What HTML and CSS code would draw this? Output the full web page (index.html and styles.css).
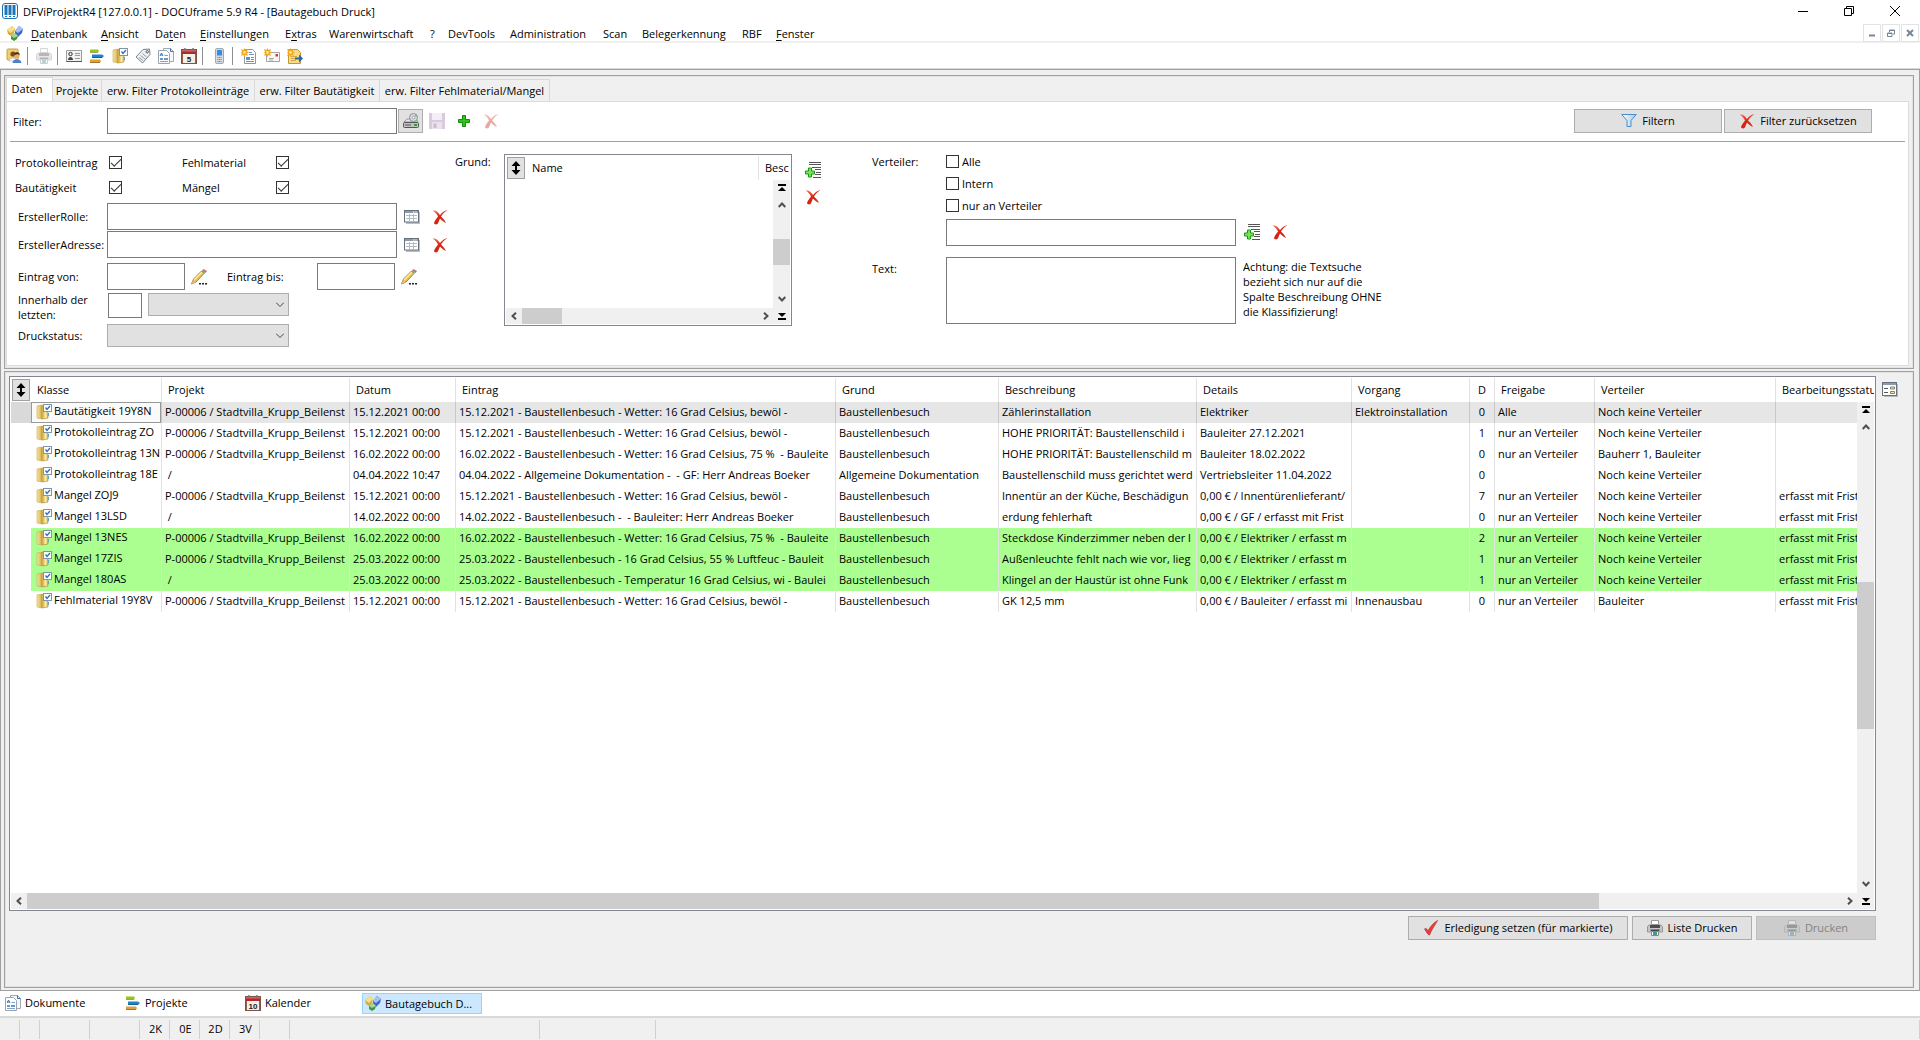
FILE: index.html
```html
<!DOCTYPE html>
<html lang="de">
<head>
<meta charset="utf-8">
<title>DFViProjektR4 [127.0.0.1] - DOCUframe 5.9 R4 - [Bautagebuch Druck]</title>
<link rel="stylesheet" href="styles.css">
</head>
<body>
<svg class="sprite" aria-hidden="true">
  <defs>
    <linearGradient id="gFolder" x1="0" x2="1"><stop offset="0" stop-color="#f8e9a4"/><stop offset="1" stop-color="#d4ac44"/></linearGradient>
    <linearGradient id="gFunnel" x1="0" x2="1"><stop offset="0" stop-color="#fff"/><stop offset="1" stop-color="#9cc9ea"/></linearGradient>
    <linearGradient id="gRed" x1="0" x2="1" y2="1"><stop offset="0" stop-color="#f0806c"/><stop offset=".5" stop-color="#d8200c"/><stop offset="1" stop-color="#b84030"/></linearGradient>
    <symbol id="app" viewBox="0 0 16 16"><rect x=".5" y=".5" width="15" height="15" rx="2.5" fill="#fff" stroke="#1a6fb0"/><path d="M2.5 2h3v10h-3zM6.500 2h3v10h-3zM10.500 2h3v10h-3z" fill="#1d74b8"/><path d="M3 13h2v1H3zM7 13h2v1H7zM11 13h2v1h-2z" fill="#1d74b8"/></symbol>
    <symbol id="cubes" viewBox="0 0 16 16"><path d="M0 5l5-4 3 3-1 4-3 3-3-2z" fill="#d8ac30"/><path d="M0 5l5-4 3 3-4 4z" fill="#f6e088"/><path d="M8 6l4-5 4 3-1 4-4 4-3-2z" fill="#3f66cc"/><path d="M8 6l4-5 4 3-5 4z" fill="#a9c0f4"/><path d="M4 11l4-3 3 3-1 3-3 2-3-2z" fill="#3f9440"/><path d="M4 11l4-3 3 3-4 2z" fill="#a3d68f"/></symbol>
    <symbol id="users" viewBox="0 0 16 16"><rect x="1" y="1" width="11" height="11" rx="1" fill="#f0cf70" stroke="#c9a040"/><circle cx="7" cy="6" r="2.600" fill="#7a4a20"/><path d="M3 13c0-4 7-4 8 0z" fill="#fff" stroke="#999" stroke-width=".5"/><circle cx="11" cy="7.500" r="2.600" fill="#e6aa74"/><path d="M8.300 7a2.700 2.700 0 0 1 5.400 0l-2-1z" fill="#3b2412"/><path d="M6.500 15c0-5 8.500-5 9 0z" fill="#4b7fd0"/></symbol>
    <symbol id="printer" viewBox="0 0 16 16"><path d="M4.500 .500h7v4h-7z" fill="#fff" stroke="#999"/><path d="M2 5h12l1.500 1.500V12H.500V6.500z" fill="#c4c7c9" stroke="#888" stroke-width=".8"/><path d="M3 5h10v3H3z" fill="#4b4d50"/><path d="M3 9.500h10l-1 1.500H4z" fill="#444"/><path d="M4.500 11.500h7v4h-7z" fill="#fff" stroke="#888"/><path d="M6 12h2v3H6z" fill="#3d8fd0"/><path d="M8 12h2v3H8z" fill="#46a060"/></symbol>
    <symbol id="card" viewBox="0 0 16 16"><path d="M.5 2.500h15v11H.500z" fill="#f2f2f2" stroke="#9c9c9c"/><path d="M.5 13.500h15.500" stroke="#555"/><circle cx="4.500" cy="6" r="1.700" fill="none" stroke="#333"/><path d="M2 12c0-4 5-4 5 0z" fill="#444"/><path d="M9 5.500h5M9 7.500h5M9 10.500h5" stroke="#999"/></symbol>
    <symbol id="gantt" viewBox="0 0 16 16"><path d="M1 1.500h8l1 1.500-1 1.500H1z" fill="#9cc414"/><path d="M3 6.500h10l2 1.500-2 2H3z" fill="#1f83cc"/><path d="M1 11.500h10l1 1.500-1 2H1z" fill="#dca03c"/><path d="M1 4.500h8M3 9.500h10M1 14.500h10" stroke="#0004"/></symbol>
    <symbol id="folder" viewBox="0 0 16 16"><path d="M1 2l5-1v14l-5-1z" fill="url(#gFolder)" stroke="#c8a850" stroke-width=".6"/><path d="M6 1.500h6v12.500l-6 1z" fill="#dfc05c" stroke="#b08c34" stroke-width=".6"/><path d="M8.500 7h2v7h-2z" fill="#f8ecb4"/><rect x="7.500" y=".5" width="8" height="7" fill="#fff" stroke="#8593a6"/><path d="M9.500 3.500l1.500 2 3-3.500" fill="none" stroke="#2d72b8" stroke-width="1.300"/><path d="M12.500 9v3" stroke="#5fa5c8"/></symbol>
    <symbol id="tag" viewBox="0 0 16 16"><path d="M1 9l7-7.500 6.500-.5.5 5.500L7.500 15z" fill="#eef2f5" stroke="#75818c"/><circle cx="12.200" cy="3.800" r="1.200" fill="#fff" stroke="#556"/><path d="M4 9.500l4 3M5.500 7.500l4.500 3.500M7.500 5.500l4 3.500" stroke="#8a9aa8"/></symbol>
    <symbol id="docs" viewBox="0 0 16 16"><path d="M5.500.500h7l3 3v10h-10z" fill="#f5f8fb" stroke="#a0aab4"/><path d="M.5 2.500h8l3 3v10H.500z" fill="#fff" stroke="#9aa4ae"/><path d="M2 8l1.500-3L5 8M2.500 7h2M12.500.500v3h3" fill="none" stroke="#3e72b4"/><path d="M6.500 7.500H10M2 13.500h8" stroke="#7fa4cc"/><path d="M2 10h3v2H2zM6 10h4v2H6z" fill="#6798cf"/></symbol>
    <symbol id="calbase" viewBox="0 0 16 16"><rect x=".5" y="1.500" width="15" height="14" fill="#f4efe8" stroke="#7c5246"/><path d="M1 2h14v4H1z" fill="#b3282c"/><path d="M1 2h14v1.500H1z" fill="#d36860"/><path d="M4 0v3M12 0v3" stroke="#777" stroke-width="1.500"/><path d="M1.500 6v9.500M14.500 6v9.500" stroke="#8d6050"/></symbol>
    <symbol id="phone" viewBox="0 0 16 16"><rect x="4.500" y=".5" width="8" height="15" rx="1.500" fill="#d5dae0" stroke="#a0a8b0"/><rect x="6" y="2" width="5" height="5.500" fill="#2f8ee0"/><path d="M6.500 9.500h4M6.500 11.500h4M6.500 13.500h4" stroke="#7d858d" stroke-dasharray="1 .5"/></symbol>
    <symbol id="star" viewBox="0 0 16 16"><path d="M3.500 0l1 2L7 1 6 3.500l2 1-2 1L7 8 4.500 7l-1 2-1-2L0 8l1-2.500-1-1 1-1L0 1l2.500 1z" fill="#f2a81e"/><circle cx="3.500" cy="4.500" r="1.400" fill="#ffe68a"/></symbol>
    <symbol id="newdoc" viewBox="0 0 16 16"><path d="M3.500 1.500h8l3 3v11h-11z" fill="#fff" stroke="#8a97a4"/><path d="M8 4.500h3M8 6.500h5M5 13.500h8" stroke="#6d94bd"/><path d="M5 9h4v3H5z" fill="#5a94cf"/><path d="M10 9.500h3M10 11.500h3" stroke="#6a6"/><use href="#star"/></symbol>
    <symbol id="newmail" viewBox="0 0 16 16"><path d="M2.500 4.500h13v9h-13z" fill="#f7f7f7" stroke="#a4a4a4"/><path d="M5 10.500h5M5 12h4" stroke="#aaa"/><path d="M11.500 6h2.500v2.500h-2.500z" fill="#d43c28"/><use href="#star"/></symbol>
    <symbol id="newnote" viewBox="0 0 16 16"><path d="M1.500 1.500h9l3 3v11h-12z" fill="#f6dc86" stroke="#c19a36"/><path d="M4 8.500h6M4 10.500h4M4 12.500h5" stroke="#d0a94c"/><path d="M8 9.500h4v-3l4 4-4 4v-3H8z" fill="#2a62ba"/><use href="#star"/></symbol>
    <symbol id="drive" viewBox="0 0 16 16"><path d="M1 9l3-3h9l2 3z" fill="#e5e5e5" stroke="#777" stroke-width=".7"/><rect x=".5" y="9.500" width="15" height="5" rx="1" fill="#c2c2c2" stroke="#555"/><path d="M2 12h6" stroke="#555"/><path d="M11 12h3" stroke="#24a824" stroke-width="2"/><circle cx="10.500" cy="4.500" r="4" fill="#d5dbe0" stroke="#8a9096"/><circle cx="10.500" cy="4.500" r="1.300" fill="#fff" stroke="#777" stroke-width=".6"/><path d="M12 2l1.500 2" stroke="#6cab6c"/></symbol>
    <symbol id="floppy" viewBox="0 0 16 16"><path d="M0 0h16v16H0z" fill="#d9cae2"/><path d="M3 0h10v7H3z" fill="#f4eef8"/><path d="M3 9h10v7H3z" fill="#eae3ee"/><path d="M4.500 10.500h3V15h-3z" fill="#cbbbd3"/></symbol>
    <symbol id="plus" viewBox="0 0 16 16"><path d="M6.500 2.500h3v4h4v3h-4v4h-3v-4h-4v-3h4z" fill="#2cc418" stroke="#118c08"/></symbol>
    <symbol id="cross" viewBox="0 0 16 16"><path d="M.5 1.500C4 1 6 3 8 6c2-2.500 4.500-4.500 7.500-5-3 2-5 4-6.500 6.500 2 2 4 4 5 6.500-2-.5-4.200-2.500-6-4.500-1 2-1.500 4-2.500 5.500-1.500 1-3.500 0-3.500-1 1-3 2.500-4.500 4-6.500C5 5 2.500 2.500.500 1.500z" fill="url(#gRed)"/></symbol>
    <symbol id="funnel" viewBox="0 0 16 16"><path d="M.7 1.500h14.600L10 7.500v6H6v-6z" fill="url(#gFunnel)" stroke="#4c8cc4"/></symbol>
    <symbol id="grid" viewBox="0 0 16 16"><path d="M2 3h14v12H2z" fill="#b8bec4"/><rect x=".5" y="1.500" width="14" height="11.500" fill="#fff" stroke="#66727e"/><path d="M1 2h13v2H1z" fill="#8d9ba8"/><path d="M9 3h4" stroke="#fff" stroke-dasharray="1 .7"/><path d="M2 6.500h11M2 9.500h11M5.500 5v7.500M9.500 5v7.500" stroke="#b4bac0"/></symbol>
    <symbol id="pencil" viewBox="0 0 16 16"><path d="M.5 15l2-5 8-8 2.500 2.500-8 8.500z" fill="#ecc453" stroke="#8a6a2c" stroke-width=".8"/><path d="M3 11l8-8" stroke="#fff0a8" stroke-width="1.300"/><path d="M10.500 2l2.500 2.500 1-1L11.500 1z" fill="#5ba08c"/><path d="M11.500 1l1-1L16 2l-1.500 2z" fill="#e06868"/><path d="M.5 15l1.500-4 2.500 2.500z" fill="#e8b48c"/><path d="M8 14h2v1.500H8zM11 14h2v1.500h-2zM14 14h2v1.500h-2z" fill="#222"/></symbol>
    <symbol id="addrow" viewBox="0 0 16 16"><path d="M4 .5h12M4 2.500h12M7 5.500h9M10 7.500h6M11 10.500h5M10 12.500h6M8 15.500h8" stroke="#555"/><path d="M3.500 6h3v3h3v3h-3v3h-3v-3H.500V9h3z" fill="#7ee05c" stroke="#0f9c0f"/></symbol>
    <symbol id="formicon" viewBox="0 0 16 16"><path d="M2 2h14v13H2z" fill="#b4bac0"/><rect x=".5" y=".5" width="14" height="13" fill="#fff" stroke="#66727e"/><path d="M1 1h13v2H1z" fill="#8d9ba8"/><path d="M2 6.500h4M2 10.500h4" stroke="#555"/><path d="M8.500 5h4v2h-4zM8.500 9.500h4v2h-4z" fill="#ffe98a" stroke="#666" stroke-width=".8"/></symbol>
    <symbol id="tick" viewBox="0 0 16 16"><path d="M1.500 9c2-1.500 3 1 3.500 2C7 7 10 3 14.500.500 12 5 8.500 10 6.500 15 4.500 15 3.500 11.500 1.500 9z" fill="#ee3a3a" stroke="#b83030" stroke-width=".7"/></symbol>
    <symbol id="updown" viewBox="0 0 10 14"><path d="M5 0l4.500 5H6v4h3.500L5 14 .500 9H4V5H.500z"/></symbol>
    <symbol id="jump" viewBox="0 0 8 8"><path d="M0 0h8v2H0zM4 3l4 4H0z"/></symbol>
    <symbol id="chev" viewBox="0 0 8 8"><path d="M.7 6L4 2.500 7.300 6" fill="none" stroke="#505050" stroke-width="2"/></symbol>
  </defs>
</svg>

<header class="titlebar">
  <svg class="icon"><use href="#app"/></svg>
  <h1>DFViProjektR4 [127.0.0.1] - DOCUframe 5.9 R4 - [Bautagebuch Druck]</h1>
  <div class="winctl">
    <button aria-label="Minimieren"><svg viewBox="0 0 10 10"><path d="M0 5.500h10"/></svg></button>
    <button aria-label="Wiederherstellen"><svg viewBox="0 0 10 10"><path d="M.5 2.500h7v7h-7zM2.500 2V.500h7v7H8"/></svg></button>
    <button aria-label="Schließen"><svg viewBox="0 0 10 10"><path d="M0 0l10 10M10 0L0 10"/></svg></button>
  </div>
</header>

<nav class="menubar">
  <svg class="icon"><use href="#cubes"/></svg>
  <a href="#"><u>D</u>atenbank</a><a href="#"><u>A</u>nsicht</a><a href="#">Da<u>t</u>en</a><a href="#"><u>E</u>instellungen</a><a href="#">E<u>x</u>tras</a><a href="#">Warenwirtschaft</a><a href="#">?</a><a href="#">DevTools</a><a href="#">Administration</a><a href="#">Scan</a><a href="#">Belegerkennung</a><a href="#">RBF</a><a href="#"><u>F</u>enster</a>
  <div class="mdictl">
    <button aria-label="Fenster minimieren"><svg viewBox="0 0 8 8"><path d="M1 6.500h6" stroke-width="2"/></svg></button>
    <button aria-label="Fenster wiederherstellen"><svg viewBox="0 0 8 8"><path d="M.5 4h4.500v3.500H.500zM.500 4.500h4.500M2.500 3V1h5v4H6M2.500 1.500h5"/></svg></button>
    <button aria-label="Fenster schließen"><svg viewBox="0 0 8 8"><path d="M1 1l6 6M7 1L1 7" stroke-width="2"/></svg></button>
  </div>
</nav>

<div class="toolbar">
  <button aria-label="Benutzer"><svg class="icon"><use href="#users"/></svg></button>
  <span class="sep"></span>
  <button aria-label="Drucken" disabled><svg class="icon faded"><use href="#printer"/></svg></button>
  <span class="sep"></span>
  <button aria-label="Adressen"><svg class="icon"><use href="#card"/></svg></button>
  <button aria-label="Projekte"><svg class="icon"><use href="#gantt"/></svg></button>
  <button aria-label="Aufgaben"><svg class="icon"><use href="#folder"/></svg></button>
  <button aria-label="Artikel"><svg class="icon"><use href="#tag"/></svg></button>
  <button aria-label="Dokumente"><svg class="icon"><use href="#docs"/></svg></button>
  <button aria-label="Kalender"><svg class="icon" viewBox="0 0 16 16"><use href="#calbase"/><text class="calnum" x="8" y="14">5</text></svg></button>
  <span class="sep"></span>
  <button aria-label="Telefon"><svg class="icon"><use href="#phone"/></svg></button>
  <span class="sep"></span>
  <button aria-label="Neues Dokument"><svg class="icon"><use href="#newdoc"/></svg></button>
  <button aria-label="Neue Nachricht"><svg class="icon"><use href="#newmail"/></svg></button>
  <button aria-label="Neue Notiz"><svg class="icon"><use href="#newnote"/></svg></button>
</div>

<main class="mdi">
  <section class="panel filterpanel">
    <div class="tabs" role="tablist">
      <button role="tab" aria-selected="true" class="tab active">Daten</button><button role="tab" class="tab">Projekte</button><button role="tab" class="tab">erw. Filter Protokolleinträge</button><button role="tab" class="tab">erw. Filter Bautätigkeit</button><button role="tab" class="tab">erw. Filter Fehlmaterial/Mangel</button>
    </div>
    <div class="page">
      <div class="filterrow">
        <label class="lbl" for="filter">Filter:</label>
        <input class="field wide low" id="filter" type="text">
        <button class="btn square" aria-label="Filter laden"><svg class="icon"><use href="#drive"/></svg></button>
        <button class="iconbtn" aria-label="Speichern" disabled><svg class="icon"><use href="#floppy"/></svg></button>
        <button class="iconbtn" aria-label="Hinzufügen"><svg class="icon"><use href="#plus"/></svg></button>
        <button class="iconbtn" aria-label="Löschen" disabled><svg class="icon faded"><use href="#cross"/></svg></button>
        <div class="actions">
          <button class="btn w148"><svg class="icon"><use href="#funnel"/></svg>Filtern</button>
          <button class="btn w148"><svg class="icon"><use href="#cross"/></svg>Filter zurücksetzen</button>
        </div>
      </div>
      <div class="formcols">
        <div class="colleft">
          <div class="checks">
            <label for="c1">Protokolleintrag</label><input id="c1" type="checkbox" checked>
            <label for="c2">Fehlmaterial</label><input id="c2" type="checkbox" checked>
            <label for="c3">Bautätigkeit</label><input id="c3" type="checkbox" checked>
            <label for="c4">Mängel</label><input id="c4" type="checkbox" checked>
          </div>
          <div class="frow"><label class="lbl in" for="rolle">ErstellerRolle:</label><input class="field wide" id="rolle" type="text"><button class="iconbtn" aria-label="Auswählen"><svg class="icon"><use href="#grid"/></svg></button><button class="iconbtn" aria-label="Leeren"><svg class="icon"><use href="#cross"/></svg></button></div>
          <div class="frow"><label class="lbl in" for="adresse">ErstellerAdresse:</label><input class="field wide" id="adresse" type="text"><button class="iconbtn" aria-label="Auswählen"><svg class="icon"><use href="#grid"/></svg></button><button class="iconbtn" aria-label="Leeren"><svg class="icon"><use href="#cross"/></svg></button></div>
          <div class="frow dates"><label class="lbl in" for="von">Eintrag von:</label><input class="field date" id="von" type="text"><button class="iconbtn" aria-label="Datum wählen"><svg class="icon"><use href="#pencil"/></svg></button><label class="lbl mid" for="bis">Eintrag bis:</label><input class="field date" id="bis" type="text"><button class="iconbtn" aria-label="Datum wählen"><svg class="icon"><use href="#pencil"/></svg></button></div>
          <div class="frow within"><label class="lbl in" for="anzahl">Innerhalb der letzten:</label><input class="field num" id="anzahl" type="text"><select class="combo narrow" aria-label="Zeitraum" disabled><option></option></select></div>
          <div class="frow"><label class="lbl in" for="status">Druckstatus:</label><select class="combo" id="status" disabled><option></option></select></div>
        </div>
        <div class="colgrund">
          <span class="caption">Grund:</span>
          <div class="listbox mini">
            <table>
              <colgroup><col class="c-sortmini"><col class="c-name"><col></colgroup>
              <thead><tr><th><button class="sort" aria-label="Sortieren"><svg><use href="#updown"/></svg></button></th><th>Name</th><th>Besc</th></tr></thead>
            </table>
            <div class="vbar"><svg class="jump"><use href="#jump"/></svg><svg class="chev"><use href="#chev"/></svg><i></i><b></b><i></i><svg class="chev down"><use href="#chev"/></svg></div>
            <div class="hbar"><svg class="chev left"><use href="#chev"/></svg><div class="track"><b style="width:17%"></b></div><svg class="chev right"><use href="#chev"/></svg><svg class="jump down"><use href="#jump"/></svg></div>
          </div>
          <div class="sidebtns"><button class="iconbtn" aria-label="Grund hinzufügen"><svg class="icon"><use href="#addrow"/></svg></button><button class="iconbtn" aria-label="Grund entfernen"><svg class="icon"><use href="#cross"/></svg></button></div>
        </div>
        <div class="colverteiler">
          <span class="caption">Verteiler:</span>
          <div class="vchecks">
            <label><input type="checkbox">Alle</label>
            <label><input type="checkbox">Intern</label>
            <label><input type="checkbox">nur an Verteiler</label>
          </div>
          <div class="vinput"><input class="field wide" type="text" aria-label="Verteiler"><button class="iconbtn" aria-label="Verteiler hinzufügen"><svg class="icon"><use href="#addrow"/></svg></button><button class="iconbtn" aria-label="Verteiler entfernen"><svg class="icon"><use href="#cross"/></svg></button></div>
          <label class="caption" for="text">Text:</label>
          <div class="vtext"><textarea class="field wide" id="text"></textarea><p>Achtung: die Textsuche bezieht sich nur auf die Spalte Beschreibung OHNE die Klassifizierung!</p></div>
        </div>
      </div>
    </div>
  </section>

  <section class="panel listpanel">
    <div class="listrow">
      <div class="listbox main">
        <table>
          <colgroup><col class="c-sort"><col class="c-klasse"><col class="c-projekt"><col class="c-datum"><col class="c-eintrag"><col class="c-grund"><col class="c-beschr"><col class="c-details"><col class="c-vorgang"><col class="c-d"><col class="c-frei"><col class="c-vert"><col></colgroup>
          <thead><tr><th><button class="sort" aria-label="Sortieren"><svg><use href="#updown"/></svg></button></th><th>Klasse</th><th>Projekt</th><th>Datum</th><th>Eintrag</th><th>Grund</th><th>Beschreibung</th><th>Details</th><th>Vorgang</th><th>D</th><th>Freigabe</th><th>Verteiler</th><th>Bearbeitungsstatu</th></tr></thead>
          <tbody>
            <tr class="sel"><td></td><td><svg class="icon"><use href="#folder"/></svg>Bautätigkeit 19Y8N</td><td>P-00006 / Stadtvilla_Krupp_Beilenst</td><td>15.12.2021 00:00</td><td>15.12.2021 - Baustellenbesuch - Wetter: 16 Grad Celsius, bewöl -</td><td>Baustellenbesuch</td><td>Zählerinstallation</td><td>Elektriker</td><td>Elektroinstallation</td><td>0</td><td>Alle</td><td>Noch keine Verteiler</td><td></td></tr>
            <tr><td></td><td><svg class="icon"><use href="#folder"/></svg>Protokolleintrag ZO</td><td>P-00006 / Stadtvilla_Krupp_Beilenst</td><td>15.12.2021 00:00</td><td>15.12.2021 - Baustellenbesuch - Wetter: 16 Grad Celsius, bewöl -</td><td>Baustellenbesuch</td><td>HOHE PRIORITÄT: Baustellenschild i</td><td>Bauleiter 27.12.2021</td><td></td><td>1</td><td>nur an Verteiler</td><td>Noch keine Verteiler</td><td></td></tr>
            <tr><td></td><td><svg class="icon"><use href="#folder"/></svg>Protokolleintrag 13N</td><td>P-00006 / Stadtvilla_Krupp_Beilenst</td><td>16.02.2022 00:00</td><td>16.02.2022 - Baustellenbesuch - Wetter: 16 Grad Celsius, 75 % &nbsp;- Bauleite</td><td>Baustellenbesuch</td><td>HOHE PRIORITÄT: Baustellenschild m</td><td>Bauleiter 18.02.2022</td><td></td><td>0</td><td>nur an Verteiler</td><td>Bauherr 1, Bauleiter</td><td></td></tr>
            <tr><td></td><td><svg class="icon"><use href="#folder"/></svg>Protokolleintrag 18E</td><td>&nbsp;/</td><td>04.04.2022 10:47</td><td>04.04.2022 - Allgemeine Dokumentation - &nbsp;- GF: Herr Andreas Boeker</td><td>Allgemeine Dokumentation</td><td>Baustellenschild muss gerichtet werd</td><td>Vertriebsleiter 11.04.2022</td><td></td><td>0</td><td></td><td>Noch keine Verteiler</td><td></td></tr>
            <tr><td></td><td><svg class="icon"><use href="#folder"/></svg>Mangel ZOJ9</td><td>P-00006 / Stadtvilla_Krupp_Beilenst</td><td>15.12.2021 00:00</td><td>15.12.2021 - Baustellenbesuch - Wetter: 16 Grad Celsius, bewöl -</td><td>Baustellenbesuch</td><td>Innentür an der Küche, Beschädigun</td><td>0,00 € / Innentürenlieferant/</td><td></td><td>7</td><td>nur an Verteiler</td><td>Noch keine Verteiler</td><td>erfasst mit Frist</td></tr>
            <tr><td></td><td><svg class="icon"><use href="#folder"/></svg>Mangel 13LSD</td><td>&nbsp;/</td><td>14.02.2022 00:00</td><td>14.02.2022 - Baustellenbesuch - &nbsp;- Bauleiter: Herr Andreas Boeker</td><td>Baustellenbesuch</td><td>erdung fehlerhaft</td><td>0,00 € / GF / erfasst mit Frist</td><td></td><td>0</td><td>nur an Verteiler</td><td>Noch keine Verteiler</td><td>erfasst mit Frist</td></tr>
            <tr class="done"><td></td><td><svg class="icon"><use href="#folder"/></svg>Mangel 13NES</td><td>P-00006 / Stadtvilla_Krupp_Beilenst</td><td>16.02.2022 00:00</td><td>16.02.2022 - Baustellenbesuch - Wetter: 16 Grad Celsius, 75 % &nbsp;- Bauleite</td><td>Baustellenbesuch</td><td>Steckdose Kinderzimmer neben der l</td><td>0,00 € / Elektriker / erfasst m</td><td></td><td>2</td><td>nur an Verteiler</td><td>Noch keine Verteiler</td><td>erfasst mit Frist</td></tr>
            <tr class="done"><td></td><td><svg class="icon"><use href="#folder"/></svg>Mangel 17ZIS</td><td>P-00006 / Stadtvilla_Krupp_Beilenst</td><td>25.03.2022 00:00</td><td>25.03.2022 - Baustellenbesuch - 16 Grad Celsius, 55 % Luftfeuc - Bauleit</td><td>Baustellenbesuch</td><td>Außenleuchte fehlt nach wie vor, lieg</td><td>0,00 € / Elektriker / erfasst m</td><td></td><td>1</td><td>nur an Verteiler</td><td>Noch keine Verteiler</td><td>erfasst mit Frist</td></tr>
            <tr class="done"><td></td><td><svg class="icon"><use href="#folder"/></svg>Mangel 180AS</td><td>&nbsp;/</td><td>25.03.2022 00:00</td><td>25.03.2022 - Baustellenbesuch - Temperatur 16 Grad Celsius, wi - Baulei</td><td>Baustellenbesuch</td><td>Klingel an der Haustür ist ohne Funk</td><td>0,00 € / Elektriker / erfasst m</td><td></td><td>1</td><td>nur an Verteiler</td><td>Noch keine Verteiler</td><td>erfasst mit Frist</td></tr>
            <tr><td></td><td><svg class="icon"><use href="#folder"/></svg>Fehlmaterial 19Y8V</td><td>P-00006 / Stadtvilla_Krupp_Beilenst</td><td>15.12.2021 00:00</td><td>15.12.2021 - Baustellenbesuch - Wetter: 16 Grad Celsius, bewöl -</td><td>Baustellenbesuch</td><td>GK 12,5 mm</td><td>0,00 € / Bauleiter / erfasst mi</td><td>Innenausbau</td><td>0</td><td>nur an Verteiler</td><td>Bauleiter</td><td>erfasst mit Frist</td></tr>
          </tbody>
        </table>
        <div class="vbar"><svg class="jump"><use href="#jump"/></svg><svg class="chev"><use href="#chev"/></svg><i></i><b></b><i></i><svg class="chev down"><use href="#chev"/></svg></div>
        <div class="hbar"><svg class="chev left"><use href="#chev"/></svg><div class="track"><b style="width:86.6%"></b></div><svg class="chev right"><use href="#chev"/></svg><svg class="jump down"><use href="#jump"/></svg></div>
      </div>
      <button class="iconbtn formbtn" aria-label="Formular"><svg class="icon"><use href="#formicon"/></svg></button>
    </div>
    <div class="listactions">
      <button class="btn w220"><svg class="icon"><use href="#tick"/></svg>Erledigung setzen (für markierte)</button>
      <button class="btn w120"><svg class="icon"><use href="#printer"/></svg>Liste Drucken</button>
      <button class="btn w120" disabled><svg class="icon faded"><use href="#printer"/></svg>Drucken</button>
    </div>
  </section>
</main>

<nav class="windows">
  <a href="#"><svg class="icon"><use href="#docs"/></svg>Dokumente</a>
  <a href="#"><svg class="icon"><use href="#gantt"/></svg>Projekte</a>
  <a href="#"><svg class="icon" viewBox="0 0 16 16"><use href="#calbase"/><text class="calnum" x="8" y="14">10</text></svg>Kalender</a>
  <a href="#" class="current"><svg class="icon"><use href="#cubes"/></svg>Bautagebuch D...</a>
</nav>
<footer class="status"><span></span><span></span><span></span><span></span><span>2K</span><span>0E</span><span>2D</span><span>3V</span><span></span><span></span><span></span><span></span></footer>
</body>
</html>
```
FILE: styles.css
```css
* { box-sizing: border-box; }

body {
  margin: 0;
  min-height: 100vh;
  display: flex;
  flex-direction: column;
  background: #f0f0f0;
  color: #000;
  font: 11px/15px "Open Sans", "Noto Sans", sans-serif;
}

button, input, select, textarea { font: inherit; color: inherit; margin: 0; border-radius: 0; }
button { padding: 0; border: 0; background: none; display: flex; align-items: center; justify-content: center; flex: none; }
a { color: inherit; text-decoration: none; }
svg { display: block; flex: none; }
.sprite { position: absolute; width: 0; height: 0; }
.icon { width: 16px; height: 16px; }
.faded { opacity: .4; }
.calnum { font: bold 8px "Liberation Sans", sans-serif; text-anchor: middle; fill: #222; }

/* Title bar and menus */
.titlebar { display: flex; align-items: center; height: 24px; padding: 0 20px 2px 2px; background: #fff; }
.titlebar h1 { flex: 1; margin: 0 0 0 5px; font-size: 11px; font-weight: 400; }
.winctl { display: flex; gap: 36px; }
.winctl svg { width: 10px; height: 10px; fill: none; stroke: #000; }

.menubar {
  display: grid;
  grid-template-columns: 24px 70px 54px 45px 85px 44px 101px 18px 62px 93px 39px 100px 34px 1fr auto;
  align-items: center;
  height: 19px;
  padding: 0 0 2px 7px;
  background: #fff;
  border-bottom: 2px solid #f0f0f0;
  white-space: nowrap;
}
.menubar u { text-underline-offset: 2px; }
.mdictl { display: flex; gap: 1px; padding-right: 1px; }
.mdictl button { width: 18px; height: 18px; border: 1px solid #e3e3e3; }
.mdictl svg { width: 8px; height: 8px; fill: none; stroke: #75869a; }

.toolbar { display: flex; align-items: center; gap: 7px; height: 26px; padding: 0 6px; background: #fff; border-bottom: 1px solid #d9d9d9; }
.sep { width: 1px; height: 18px; margin: 0 1px 0 -2px; background: #8e8e8e; }

/* Child window */
.mdi { flex: 1; display: flex; flex-direction: column; gap: 2px; padding: 5px 5px 2px 3px; border: 1px solid #a0a0a0; }
.panel { border: 1px solid #a0a0a0; box-shadow: inset 0 0 0 1px #e3e3e3; }
.filterpanel { padding: 1px 4px 2px 1px; }

.tabs { display: flex; align-items: flex-end; height: 24px; }
.tab { height: 22px; padding: 0 2px; border: 1px solid #d9d9d9; border-left: 0; border-bottom: 0; }
.tab:nth-child(2) { width: 49px; }
.tab:nth-child(3) { width: 153px; }
.tab:nth-child(4) { width: 125px; }
.tab:nth-child(5) { width: 170px; }
.tab.active { width: 47px; height: 24px; padding: 0 5px 3px 0; background: #fff; border-left: 1px solid #d9d9d9; }
.page { background: #fff; border: 1px solid #dcdcdc; padding-bottom: 18px; }

.filterrow { display: flex; align-items: center; height: 40px; margin: 0 3px; padding-bottom: 1px; border-bottom: 1px solid #a0a0a0; }
.filterrow .lbl { width: 97px; padding-left: 3px; }
.filterrow .iconbtn { margin-left: 4px; }
.filterrow .iconbtn:nth-of-type(3), .filterrow .iconbtn:nth-of-type(4) { margin-left: 7px; }
.actions { display: flex; gap: 2px; margin-left: auto; padding-right: 33px; }

.lbl { flex: none; width: 100px; padding-left: 8px; white-space: nowrap; }
.lbl.in { padding-left: 11px; }
.field { border: 1px solid #7a7a7a; background: #fff; height: 27px; padding: 0 4px; outline: 0; flex: none; resize: none; }
.field.wide { width: 290px; }
.field.low { height: 26px; }
.field.date { width: 78px; }
.field.num { width: 34px; height: 25px; margin-left: 1px; }
.iconbtn { width: 20px; height: 20px; }
.btn { height: 24px; gap: 5px; padding-bottom: 1px; border: 1px solid #adadad; background: #e1e1e1; }
.btn:disabled { background: #ccc; border-color: #bfbfbf; color: #838383; }
.btn.square { width: 25px; margin-left: 1px; }
.w148 { width: 148px; }
.w220 { width: 220px; }
.w120 { width: 120px; }

input[type="checkbox"] { appearance: none; flex: none; width: 13px; height: 13px; border: 1px solid #333; background: #fff; display: grid; place-items: center; }
input[type="checkbox"]:checked::before { content: ""; width: 9px; height: 4px; border: solid #333; border-width: 0 0 1px 1px; transform: translateY(-1px) rotate(-45deg); }

.formcols { display: flex; }
.colleft { width: 448px; padding-top: 8px; }
.checks { display: grid; grid-template-columns: 94px 73px 94px 13px; grid-auto-rows: 25px; align-items: center; padding-left: 8px; margin-bottom: 3px; }
.frow { display: flex; align-items: center; height: 27px; margin-bottom: 1px; }
.frow .iconbtn { margin-left: 5px; }
.frow .iconbtn + .iconbtn { margin-left: 8px; }
.frow.dates { margin: 5px 0 2px; }
.frow.dates .iconbtn { margin-left: 4px; }
.lbl.mid { width: 108px; padding-left: 18px; }
.frow.within { height: 32px; margin: 0; align-items: flex-start; }
.frow.within .lbl { white-space: normal; padding-right: 10px; }
.frow.within .field, .frow.within .combo { margin-top: 1px; }
.frow:last-child { height: 23px; margin: 0; }
.combo {
  appearance: none;
  width: 182px;
  height: 23px;
  border: 1px solid #adadad;
  opacity: 1;
  background: #e1e1e1 url("data:image/svg+xml,%3Csvg xmlns='http://www.w3.org/2000/svg' width='8' height='5'%3E%3Cpath d='M0 .5l4 4 4-4' fill='none' stroke='%23444'/%3E%3C/svg%3E") no-repeat right 4px center;
}
.combo.narrow { width: 141px; margin-left: 6px; }

.colgrund { display: flex; width: 417px; padding-top: 12px; }
.caption { flex: none; width: 49px; }
.colgrund .sidebtns { display: flex; flex-direction: column; gap: 7px; padding: 6px 0 0 11px; }

.colverteiler { display: grid; grid-template-columns: 74px auto; align-content: start; padding-top: 12px; }
.vchecks { display: flex; flex-direction: column; gap: 7px; }
.vchecks label { display: flex; align-items: center; gap: 3px; height: 15px; }
.vinput { grid-column: 2; display: flex; align-items: center; margin: 6px 0 11px; }
.vinput .iconbtn { margin: 0 0 2px 6px; }
.vinput .iconbtn + .iconbtn { margin-left: 8px; }
.colverteiler label.caption { padding-top: 4px; }
.vtext { display: flex; }
.vtext textarea { height: 67px; }
.vtext p { width: 150px; margin: 2px 0 0 7px; }

/* List boxes */
.listbox { position: relative; border: 1px solid #828790; background: #fff; padding: 1px; overflow: hidden; }
.listbox.mini { width: 288px; height: 172px; flex: none; }
.listbox table { width: 100%; table-layout: fixed; border-collapse: separate; border-spacing: 0; }
.listbox th, .listbox td { padding: 0 3px 2px; text-align: left; font-weight: 400; white-space: nowrap; overflow: hidden; border-right: 1px solid #e2e2e2; }
.listbox th { height: 24px; padding-left: 6px; }
.listbox td { height: 21px; }
.listbox th:first-child, .listbox td:first-child { padding: 0 1px; border: 0; }
.listbox th:last-child, .listbox td:last-child { border: 0; padding-right: 0; }
.sort { width: 18px; height: 22px; border: 1px solid #a0a0a0; background: #e1e1e1; }
.sort svg { width: 10px; height: 14px; }
.c-sortmini { width: 20px; }
.c-name { width: 233px; }
.c-sort { width: 20px; }
.c-klasse { width: 131px; }
.c-projekt { width: 188px; }
.c-datum { width: 106px; }
.c-eintrag { width: 380px; }
.c-grund { width: 163px; }
.c-beschr { width: 198px; }
.c-details { width: 155px; }
.c-vorgang { width: 118px; }
.c-d { width: 25px; }
.c-frei { width: 100px; }
.c-vert { width: 181px; }
.main td .icon { display: inline-block; vertical-align: middle; margin: 0 2px; }
.main th:nth-child(10), .main td:nth-child(10) { padding: 0 0 2px; text-align: center; }
.sel td { background: #e6e6e6; border-color: #c8c8c8; }
.sel td:first-child { background: #d9d9d9; }
.sel td:nth-child(2) { background: #fafafa; box-shadow: inset 0 0 0 1px #999; }
.done td:not(:first-child) { background: #aaff90; }

.vbar { position: absolute; right: 1px; top: 25px; bottom: 17px; width: 17px; display: flex; flex-direction: column; align-items: center; background: #f0f0f0; }
.vbar i, .vbar b { flex: 1; width: 100%; }
.vbar b, .track b { background: #cdcdcd; }
.hbar { position: absolute; left: 1px; right: 1px; bottom: 1px; height: 16px; display: flex; align-items: center; background: #f0f0f0; }
.track { flex: 1; height: 100%; }
.track b { display: block; height: 100%; }
.jump, .chev { width: 8px; height: 8px; margin: 4px; }
.vbar .chev { margin: 5px 4px; }
.down { transform: rotate(180deg); }
.left { transform: rotate(-90deg); }
.right { transform: rotate(90deg); }

.listpanel { flex: 1; display: flex; flex-direction: column; padding: 4px 37px 47px 4px; }
.listrow { flex: 1; display: flex; align-items: flex-start; margin-right: -32px; }
.listbox.main { flex: 1; align-self: stretch; min-height: 250px; }
.formbtn { margin: 4px 8px 0 4px; }
.listactions { display: flex; justify-content: flex-end; gap: 4px; padding-top: 5px; }

/* Window list and status bar */
.windows { display: flex; align-items: center; height: 25px; padding: 0 2px 1px; background: #fff; }
.windows a { display: flex; align-items: center; gap: 4px; width: 120px; height: 21px; padding: 0 0 1px 3px; white-space: nowrap; }
.windows .current { background: #cce8ff; border: 1px solid #99d1ff; padding: 0 0 0 2px; }
.status { display: grid; grid-template-columns: 20px 20px 50px 50px 30px 30px 30px 30px 30px 250px 116px 1fr; height: 24px; border-top: 2px solid #d9d9d9; text-align: center; }
.status span { margin: 2px 0 1px; padding: 1px 0 0 2px; border-right: 1px solid #d0d0d0; }
```
